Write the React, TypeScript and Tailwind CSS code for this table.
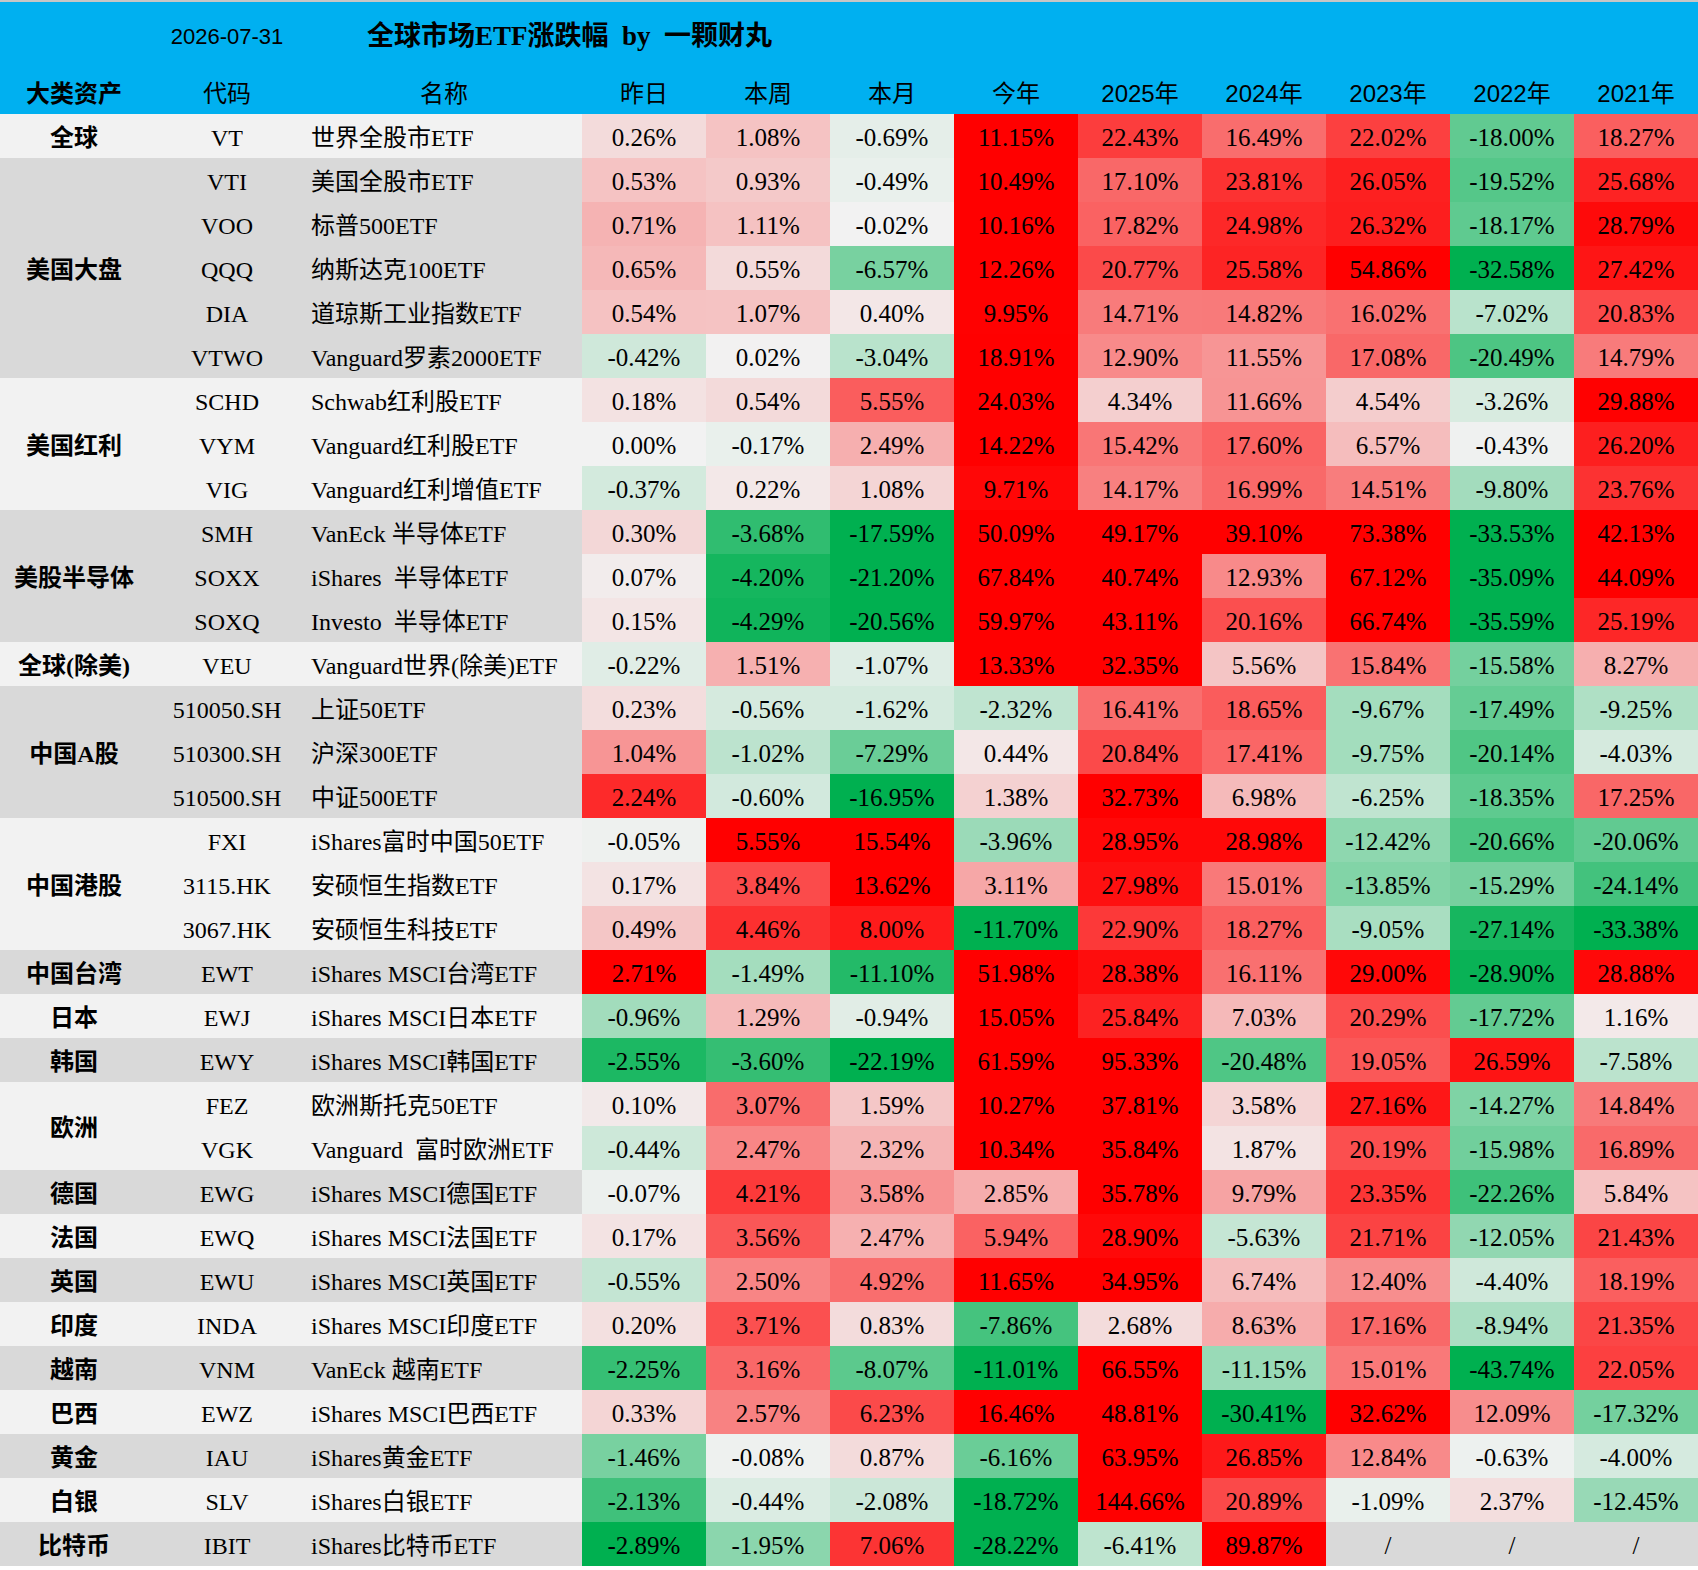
import React from "react";

type Row = [string, string, (number | null)[]];
type Group = { cat: string; rows: Row[] };

const groups: Group[] = [
  { cat: "全球", rows: [["VT", "世界全股市ETF", [0.26, 1.08, -0.69, 11.15, 22.43, 16.49, 22.02, -18.0, 18.27]]] },
  {
    cat: "美国大盘",
    rows: [
      ["VTI", "美国全股市ETF", [0.53, 0.93, -0.49, 10.49, 17.1, 23.81, 26.05, -19.52, 25.68]],
      ["VOO", "标普500ETF", [0.71, 1.11, -0.02, 10.16, 17.82, 24.98, 26.32, -18.17, 28.79]],
      ["QQQ", "纳斯达克100ETF", [0.65, 0.55, -6.57, 12.26, 20.77, 25.58, 54.86, -32.58, 27.42]],
      ["DIA", "道琼斯工业指数ETF", [0.54, 1.07, 0.4, 9.95, 14.71, 14.82, 16.02, -7.02, 20.83]],
      ["VTWO", "Vanguard罗素2000ETF", [-0.42, 0.02, -3.04, 18.91, 12.9, 11.55, 17.08, -20.49, 14.79]],
    ],
  },
  {
    cat: "美国红利",
    rows: [
      ["SCHD", "Schwab红利股ETF", [0.18, 0.54, 5.55, 24.03, 4.34, 11.66, 4.54, -3.26, 29.88]],
      ["VYM", "Vanguard红利股ETF", [0.0, -0.17, 2.49, 14.22, 15.42, 17.6, 6.57, -0.43, 26.2]],
      ["VIG", "Vanguard红利增值ETF", [-0.37, 0.22, 1.08, 9.71, 14.17, 16.99, 14.51, -9.8, 23.76]],
    ],
  },
  {
    cat: "美股半导体",
    rows: [
      ["SMH", "VanEck 半导体ETF", [0.3, -3.68, -17.59, 50.09, 49.17, 39.1, 73.38, -33.53, 42.13]],
      ["SOXX", "iShares  半导体ETF", [0.07, -4.2, -21.2, 67.84, 40.74, 12.93, 67.12, -35.09, 44.09]],
      ["SOXQ", "Investo  半导体ETF", [0.15, -4.29, -20.56, 59.97, 43.11, 20.16, 66.74, -35.59, 25.19]],
    ],
  },
  { cat: "全球(除美)", rows: [["VEU", "Vanguard世界(除美)ETF", [-0.22, 1.51, -1.07, 13.33, 32.35, 5.56, 15.84, -15.58, 8.27]]] },
  {
    cat: "中国A股",
    rows: [
      ["510050.SH", "上证50ETF", [0.23, -0.56, -1.62, -2.32, 16.41, 18.65, -9.67, -17.49, -9.25]],
      ["510300.SH", "沪深300ETF", [1.04, -1.02, -7.29, 0.44, 20.84, 17.41, -9.75, -20.14, -4.03]],
      ["510500.SH", "中证500ETF", [2.24, -0.6, -16.95, 1.38, 32.73, 6.98, -6.25, -18.35, 17.25]],
    ],
  },
  {
    cat: "中国港股",
    rows: [
      ["FXI", "iShares富时中国50ETF", [-0.05, 5.55, 15.54, -3.96, 28.95, 28.98, -12.42, -20.66, -20.06]],
      ["3115.HK", "安硕恒生指数ETF", [0.17, 3.84, 13.62, 3.11, 27.98, 15.01, -13.85, -15.29, -24.14]],
      ["3067.HK", "安硕恒生科技ETF", [0.49, 4.46, 8.0, -11.7, 22.9, 18.27, -9.05, -27.14, -33.38]],
    ],
  },
  { cat: "中国台湾", rows: [["EWT", "iShares MSCI台湾ETF", [2.71, -1.49, -11.1, 51.98, 28.38, 16.11, 29.0, -28.9, 28.88]]] },
  { cat: "日本", rows: [["EWJ", "iShares MSCI日本ETF", [-0.96, 1.29, -0.94, 15.05, 25.84, 7.03, 20.29, -17.72, 1.16]]] },
  { cat: "韩国", rows: [["EWY", "iShares MSCI韩国ETF", [-2.55, -3.6, -22.19, 61.59, 95.33, -20.48, 19.05, 26.59, -7.58]]] },
  {
    cat: "欧洲",
    rows: [
      ["FEZ", "欧洲斯托克50ETF", [0.1, 3.07, 1.59, 10.27, 37.81, 3.58, 27.16, -14.27, 14.84]],
      ["VGK", "Vanguard  富时欧洲ETF", [-0.44, 2.47, 2.32, 10.34, 35.84, 1.87, 20.19, -15.98, 16.89]],
    ],
  },
  { cat: "德国", rows: [["EWG", "iShares MSCI德国ETF", [-0.07, 4.21, 3.58, 2.85, 35.78, 9.79, 23.35, -22.26, 5.84]]] },
  { cat: "法国", rows: [["EWQ", "iShares MSCI法国ETF", [0.17, 3.56, 2.47, 5.94, 28.9, -5.63, 21.71, -12.05, 21.43]]] },
  { cat: "英国", rows: [["EWU", "iShares MSCI英国ETF", [-0.55, 2.5, 4.92, 11.65, 34.95, 6.74, 12.4, -4.4, 18.19]]] },
  { cat: "印度", rows: [["INDA", "iShares MSCI印度ETF", [0.2, 3.71, 0.83, -7.86, 2.68, 8.63, 17.16, -8.94, 21.35]]] },
  { cat: "越南", rows: [["VNM", "VanEck 越南ETF", [-2.25, 3.16, -8.07, -11.01, 66.55, -11.15, 15.01, -43.74, 22.05]]] },
  { cat: "巴西", rows: [["EWZ", "iShares MSCI巴西ETF", [0.33, 2.57, 6.23, 16.46, 48.81, -30.41, 32.62, 12.09, -17.32]]] },
  { cat: "黄金", rows: [["IAU", "iShares黄金ETF", [-1.46, -0.08, 0.87, -6.16, 63.95, 26.85, 12.84, -0.63, -4.0]]] },
  { cat: "白银", rows: [["SLV", "iShares白银ETF", [-2.13, -0.44, -2.08, -18.72, 144.66, 20.89, -1.09, 2.37, -12.45]]] },
  { cat: "比特币", rows: [["IBIT", "iShares比特币ETF", [-2.89, -1.95, 7.06, -28.22, -6.41, 89.87, null, null, null]]] },
];

const headers = ["昨日", "本周", "本月", "今年", "2025年", "2024年", "2023年", "2022年", "2021年"];

const POS = [2.71, 5.55, 9, 10, 30, 30, 30, 29, 30];
const NEG = [2.89, 4.6, 13, 11, 30, 30.41, 30, 30, 33.38];

function cellColor(v: number | null, ci: number): string {
  if (v === null) return "#d9d9d9";
  if (v >= 0) {
    const t = Math.min(1, v / POS[ci]);
    const r = Math.round(242 + 13 * t);
    const g = Math.round(242 * (1 - t));
    return `rgb(${r},${g},${g})`;
  }
  const t = Math.min(1, -v / NEG[ci]);
  const r = Math.round(242 * (1 - t));
  const g = Math.round(242 - 66 * t);
  const b = Math.round(242 - 162 * t);
  return `rgb(${r},${g},${b})`;
}

const serif = "font-['Liberation_Serif','Noto_Sans_CJK_SC',serif]";

export default function App() {
  return (
    <div className="w-[1698px] bg-white text-black">
      <div className="h-[2px] bg-[#c6c6c6]" />
      <div className="bg-[#00b0f0]">
        <div className="flex h-[68px] items-center">
          <div className="w-[148px]" />
          <div className="flex w-[158px] justify-center font-['Liberation_Sans',sans-serif] text-[22px]">2026-07-31</div>
          <div className={`pl-[61px] ${serif} whitespace-pre text-[27px] font-bold`}>全球市场ETF涨跌幅  by  一颗财丸</div>
        </div>
        <div className="flex h-[44px] items-center pt-[3px] font-['Liberation_Sans','Noto_Sans_CJK_SC',sans-serif] text-[24px]">
          <div className="flex w-[148px] justify-center font-bold">大类资产</div>
          <div className="flex w-[158px] justify-center">代码</div>
          <div className="flex w-[276px] justify-center">名称</div>
          {headers.map((h) => (
            <div key={h} className="flex w-[124px] justify-center">
              {h}
            </div>
          ))}
        </div>
      </div>
      <div className={serif}>
        {groups.map((g, gi) => {
          const bg = gi % 2 === 0 ? "bg-[#f2f2f2]" : "bg-[#d9d9d9]";
          return (
            <div key={g.cat} className="flex">
              <div className={`flex w-[148px] items-center justify-center pt-[3px] text-[24px] font-bold ${bg}`}>{g.cat}</div>
              <div className="flex flex-col">
                {g.rows.map(([code, name, vals]) => (
                  <div key={code} className="flex h-[44px]">
                    <div className={`flex w-[158px] items-center justify-center pt-[3px] text-[24px] ${bg}`}>{code}</div>
                    <div className={`flex w-[276px] items-center whitespace-pre pl-[5px] pt-[3px] text-[24px] ${bg}`}>{name}</div>
                    {vals.map((v, ci) => (
                      <div
                        key={ci}
                        className="flex w-[124px] items-center justify-center pt-[3px] text-[25px]"
                        style={{ backgroundColor: cellColor(v, ci) }}
                      >
                        {v === null ? "/" : `${v.toFixed(2)}%`}
                      </div>
                    ))}
                  </div>
                ))}
              </div>
            </div>
          );
        })}
      </div>
    </div>
  );
}
